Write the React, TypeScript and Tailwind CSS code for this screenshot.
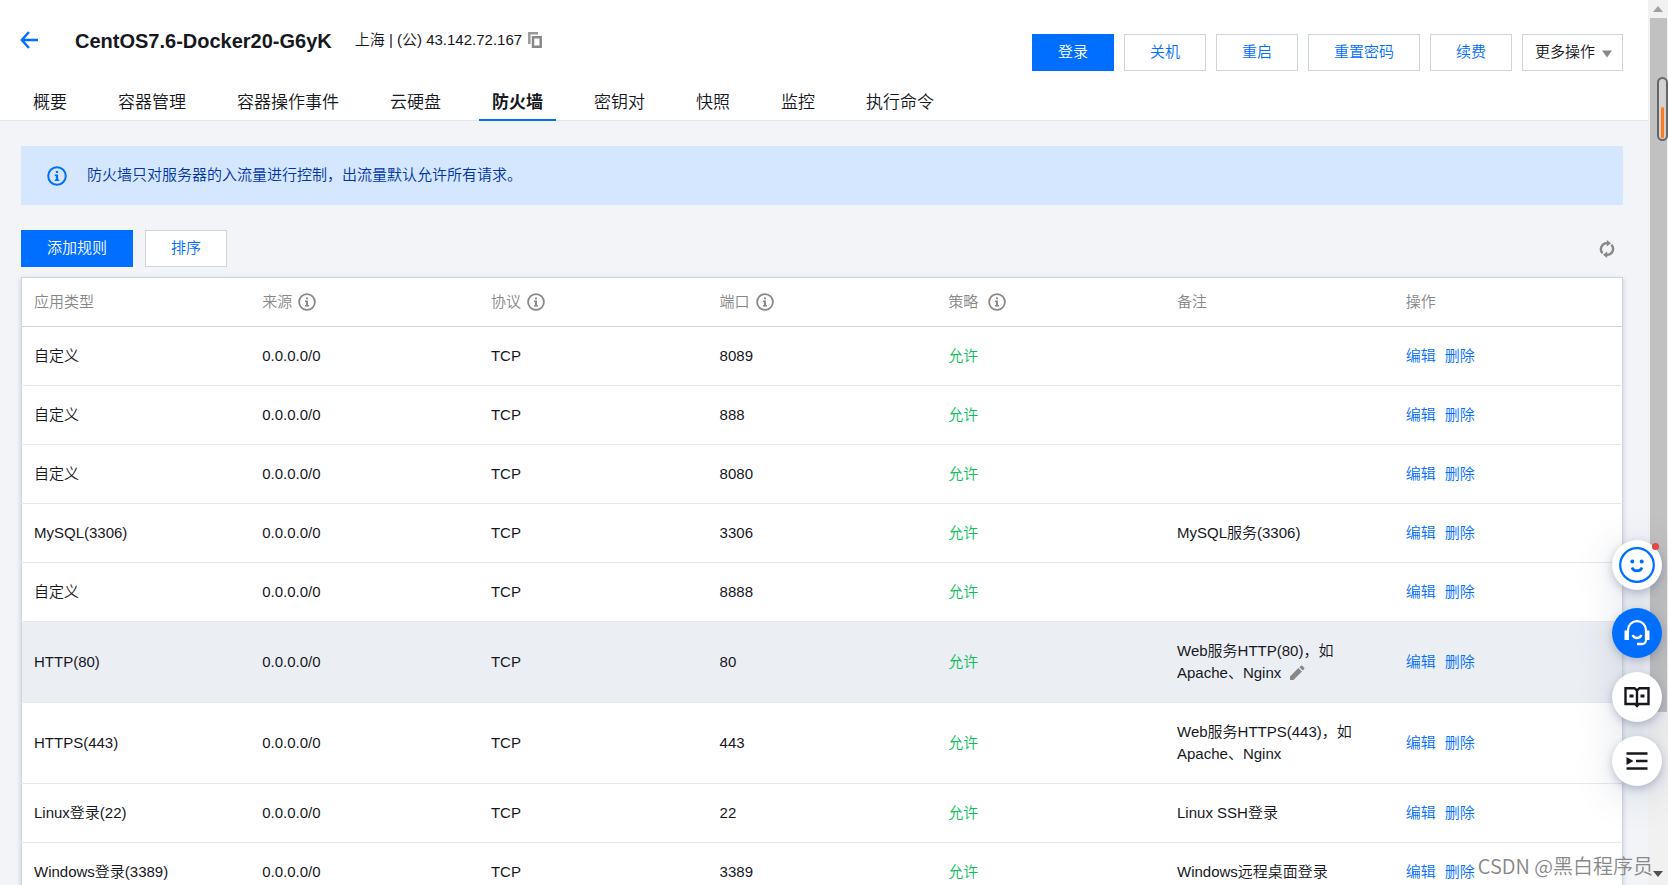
import React from "react";

interface Rule {
  app: string;
  port: string;
  remark?: string[];
  active?: boolean;
}

const tabs = ["概要", "容器管理", "容器操作事件", "云硬盘", "防火墙", "密钥对", "快照", "监控", "执行命令"];

const columns = [
  { label: "应用类型" },
  { label: "来源", info: true },
  { label: "协议", info: true },
  { label: "端口", info: true },
  { label: "策略", info: true, wide: true },
  { label: "备注" },
  { label: "操作" },
];

const rules: Rule[] = [
  { app: "自定义", port: "8089" },
  { app: "自定义", port: "888" },
  { app: "自定义", port: "8080" },
  { app: "MySQL(3306)", port: "3306", remark: ["MySQL服务(3306)"] },
  { app: "自定义", port: "8888" },
  { app: "HTTP(80)", port: "80", remark: ["Web服务HTTP(80)，如", "Apache、Nginx"], active: true },
  { app: "HTTPS(443)", port: "443", remark: ["Web服务HTTPS(443)，如", "Apache、Nginx"] },
  { app: "Linux登录(22)", port: "22", remark: ["Linux SSH登录"] },
  { app: "Windows登录(3389)", port: "3389", remark: ["Windows远程桌面登录"] },
];

const InfoIcon: React.FC<{ className: string }> = ({ className }) => (
  <svg viewBox="0 0 18 18" fill="none" className={className} aria-hidden="true">
    <circle cx="9" cy="9" r="7.9" stroke="currentColor" strokeWidth="1.8" />
    <path d="M8 4.4h2v1.9H8zM7 7.6h3v4.5h1v1.3H7v-1.3h1V9H7z" fill="currentColor" />
  </svg>
);

const CopyIcon = () => (
  <svg viewBox="0 0 14 16" fill="none" strokeWidth="2.5" className="h-4 w-3.5" aria-hidden="true">
    <path d="M1.300 12V1.300H10" stroke="#999" />
    <path d="M5 5.300h7.700v9.400H5z" stroke="#888" />
  </svg>
);

const PencilIcon = () => (
  <svg viewBox="0 0 16 16" fill="#888" className="h-4 w-4" aria-hidden="true">
    <path d="M1 11.500l8.400-8.400 3.500 3.500L4.500 15H1zM10.400 2.200L12 .8q.6-.5 1.200 0L15.200 2.800q.5.6 0 1.200L13.800 5.600z" />
  </svg>
);

const RefreshIcon = () => (
  <svg viewBox="0 0 16 18" fill="none" stroke="#888" strokeWidth="2.4" className="h-[18px] w-4" aria-hidden="true">
    <path d="M3.600 13.300A6 6 0 0 1 8.500 3.200M12.400 4.700A6 6 0 0 1 7.500 14.800" />
    <path d="M7.800 0l4.200 3.300-4.200 3.300zM8.200 11.400V18L4 14.700z" fill="#888" stroke="none" />
  </svg>
);

const HeaderButton: React.FC<{ children: React.ReactNode; primary?: boolean }> = ({ children, primary }) => (
  <button
    type="button"
    className={`h-[37px] border px-[25px] pb-px cursor-pointer ${
      primary ? "border-[#006eff] bg-[#006eff] text-white" : "border-[#cfd5de] bg-white text-[#006eff]"
    }`}
  >
    {children}
  </button>
);

const PageHeader = () => (
  <header className="border-b border-[#e3e6eb] bg-white pr-[25px]">
    <div className="flex h-[83px] items-start pl-5">
      <a href="#back" aria-label="返回" className="mt-[31px] text-[#006eff]">
        <svg viewBox="0 0 18 18" fill="none" stroke="currentColor" strokeWidth="2.4" className="h-[18px] w-[18px]">
          <path d="M9 1L1.800 9 9 17M2 9h16" />
        </svg>
      </a>
      <h1 className="ml-[37px] mt-[27px] text-[20px] leading-7 font-bold text-[#16181d]">CentOS7.6-Docker20-G6yK</h1>
      <div className="ml-[23px] mt-7 flex items-center gap-1.5 leading-6">
        <span>上海 | (公) 43.142.72.167</span>
        <button type="button" aria-label="复制" className="cursor-pointer">
          <CopyIcon />
        </button>
      </div>
      <div className="mt-[34px] ml-auto flex gap-2.5">
        <HeaderButton primary>登录</HeaderButton>
        <HeaderButton>关机</HeaderButton>
        <HeaderButton>重启</HeaderButton>
        <HeaderButton>重置密码</HeaderButton>
        <HeaderButton>续费</HeaderButton>
        <button
          type="button"
          className="flex h-[37px] items-center gap-[7px] border border-[#cfd5de] bg-white pr-2.5 pl-3 pb-px cursor-pointer"
        >
          更多操作
          <svg viewBox="0 0 10 8" className="mt-1 h-2 w-2.5" aria-hidden="true">
            <path d="M0 .5h10L5 7.500z" fill="#888" />
          </svg>
        </button>
      </div>
    </div>
    <nav className="-mb-px flex gap-[25px] pl-5 text-[17px]">
      {tabs.map((tab) => (
        <a
          key={tab}
          href={`#${tab}`}
          className={`flex h-[38px] items-center border-b-2 px-[13px] pt-1 ${
            tab === "防火墙" ? "border-[#006eff] font-bold" : "border-transparent"
          }`}
        >
          {tab}
        </a>
      ))}
    </nav>
  </header>
);

const RuleTable = () => (
  <table className="mt-2.5 w-full table-fixed border-collapse border border-[#cfd5de] bg-white text-left leading-[22px] shadow-[0_2px_5px_rgba(54,74,112,0.25)]">
    <thead>
      <tr className="border-b border-[#cfd5de] text-[#888]">
        {columns.map((col) => (
          <th key={col.label} scope="col" className="h-[49px] px-3 font-[350]">
            <span className={`flex items-center ${col.wide ? "gap-2.5" : "gap-1.5"}`}>
              {col.label}
              {col.info && <InfoIcon className="h-[18px] w-[18px]" />}
            </span>
          </th>
        ))}
      </tr>
    </thead>
    <tbody>
      {rules.map((rule, idx) => (
        <tr key={idx} className={`border-b border-[#e5e8ed] ${rule.active ? "bg-[#ebeef3]" : ""}`}>
          <td className="px-3 py-[18px]">{rule.app}</td>
          <td className="px-3">0.0.0.0/0</td>
          <td className="px-3">TCP</td>
          <td className="px-3">{rule.port}</td>
          <td className="px-3 text-[#0abf5b]">允许</td>
          <td className="px-3 py-[18px]">
            {rule.remark?.map((line, i) => (
              <div key={line} className="flex items-center gap-2 whitespace-nowrap">
                {line}
                {rule.active && i === 1 && (
                  <button type="button" aria-label="编辑备注" className="cursor-pointer">
                    <PencilIcon />
                  </button>
                )}
              </div>
            ))}
          </td>
          <td className="px-3 text-[#006eff]">
            <div className="flex gap-[9px]">
              <a href="#edit">编辑</a>
              <a href="#delete">删除</a>
            </div>
          </td>
        </tr>
      ))}
    </tbody>
  </table>
);

// Page scroll track drawn on the right edge, with the small gauge lying over it
const ScrollTrack = () => (
  <div className="relative flex w-5 shrink-0 flex-col items-center bg-[#f1f1f1]">
    <svg viewBox="0 0 10 6" className="my-1.5 h-1.5 w-2.5" aria-hidden="true">
      <path d="M5 0l5 6H0z" fill="#a0a0a0" />
    </svg>
    <div className="h-[694px] w-[17px] bg-[#c1c1c1]" />
    <svg viewBox="0 0 10 6" className="mt-auto mb-2 h-1.5 w-2.5" aria-hidden="true">
      <path d="M0 0h10L5 6z" fill="#505050" />
    </svg>
    <div className="absolute top-[77px] right-0 flex h-16 w-[11px] items-end justify-center rounded-full border-2 border-[#666] bg-[#d3d3d3] pb-px">
      <div className="h-[31px] w-[3px] rounded-full bg-[#ff7a1a]" />
    </div>
  </div>
);

const FloatButton: React.FC<{ label: string; className: string; children: React.ReactNode }> = ({
  label,
  className,
  children,
}) => (
  <button
    type="button"
    aria-label={label}
    className={`relative flex h-[50px] w-[50px] items-center justify-center rounded-full cursor-pointer shadow-[0_3px_8px_rgba(54,74,112,0.3),0_8px_40px_rgba(54,74,112,0.18)] ${className}`}
  >
    {children}
  </button>
);

const FloatBar = () => (
  <div className="absolute top-[540px] right-1.5 flex flex-col gap-3.5">
    <FloatButton label="智能助手" className="mb-1 bg-white">
      <svg viewBox="0 0 36 36" fill="none" stroke="#006eff" className="h-9 w-9" aria-hidden="true">
        <circle cx="18" cy="18" r="16.800" strokeWidth="2.200" />
        <path d="M13 20.500q1 3.300 5 3.300t5-3.300" strokeWidth="2.600" />
        <circle cx="13.300" cy="14.500" r="2" fill="#006eff" stroke="none" />
        <circle cx="22.700" cy="14.500" r="2" fill="#006eff" stroke="none" />
      </svg>
      <span className="absolute top-[3px] right-[3px] h-[7px] w-[7px] rounded-full bg-[#e54545]" />
    </FloatButton>
    <FloatButton label="在线客服" className="bg-[#006eff]">
      <svg viewBox="0 0 26 26" fill="none" stroke="#fff" className="h-[26px] w-[26px]" aria-hidden="true">
        <path d="M4 11.500V10a9 8.800 0 0 1 18 0v9.500a4 4 0 0 1-4 4.500h-5" strokeWidth="2.300" />
        <path d="M.5 10.500H5V20H.5zM21 10.500h4.500V20H21z" fill="#fff" stroke="none" />
        <path d="M8.500 15q1.300 3 4.500 3t4.500-3" strokeWidth="2.300" />
      </svg>
    </FloatButton>
    <FloatButton label="文档" className="bg-white">
      <svg viewBox="0 0 26 22" fill="none" stroke="#16181d" strokeWidth="2.400" className="h-[22px] w-[26px]" aria-hidden="true">
        <path d="M13 4.500L10.500 2.200H1.500V18H11l2 2 2-2h9.500V2.200h-9zM13 4.500V20" />
        <path d="M5.500 10h4M16.500 10h4" strokeWidth="2.800" />
      </svg>
    </FloatButton>
    <FloatButton label="展开菜单" className="bg-white">
      <svg viewBox="0 0 22 20" fill="none" stroke="#16181d" strokeWidth="2.300" className="h-5 w-[22px]" aria-hidden="true">
        <path d="M.5 2.500h21M10 10h11.500M.5 17.500h21" />
        <path d="M.5 6L7.500 10l-7 4z" fill="#16181d" stroke="none" />
      </svg>
    </FloatButton>
  </div>
);

export default function App() {
  return (
    <div className="relative flex h-screen overflow-hidden bg-[#f2f4f8] font-['Liberation_Sans','Noto_Sans_CJK_SC',sans-serif] text-[15px] font-[350] text-[#16181d]">
      <div className="min-w-0 flex-1">
        <PageHeader />
        <main className="mt-[25px] mr-[25px] ml-[21px]">
          <div className="flex h-[59px] items-center gap-5 bg-[#d5e7ff] px-[26px] text-[#0034a5]">
            <InfoIcon className="h-5 w-5 text-[#006eff]" />
            <p>防火墙只对服务器的入流量进行控制，出流量默认允许所有请求。</p>
          </div>
          <div className="mt-[25px] flex items-center gap-3">
            <HeaderButton primary>添加规则</HeaderButton>
            <HeaderButton>排序</HeaderButton>
            <button type="button" aria-label="刷新" className="mr-2 ml-auto cursor-pointer">
              <RefreshIcon />
            </button>
          </div>
          <RuleTable />
        </main>
      </div>
      <ScrollTrack />
      <FloatBar />
      <div className="pointer-events-none absolute right-[15px] bottom-1 font-['Noto_Sans_CJK_SC',sans-serif] text-[20px] leading-[30px] whitespace-nowrap text-[#888]">
        CSDN @黑白程序员
      </div>
    </div>
  );
}
